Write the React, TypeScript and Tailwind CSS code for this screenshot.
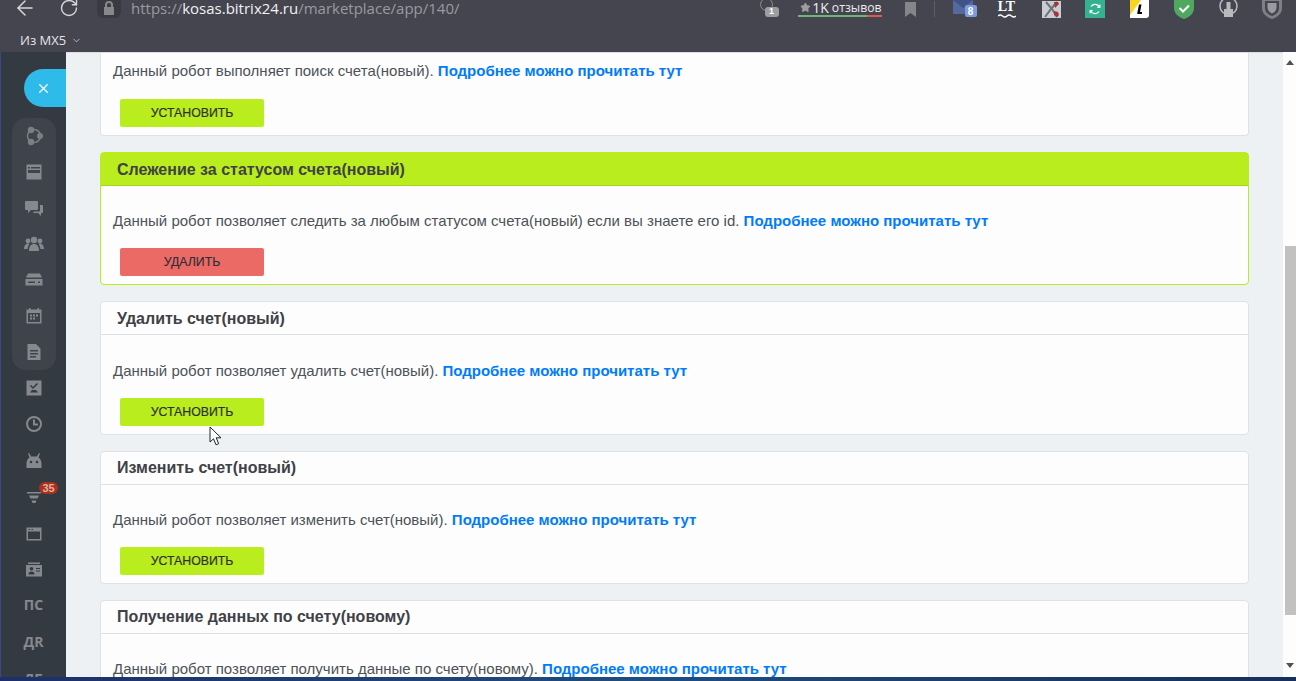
import { ArrowLeft, ChevronDown, RotateCw, Star, X } from "lucide-react";
import type { ReactNode } from "react";

type Robot = {
  title?: string;
  text: string;
  active?: boolean;
};

const robots: Robot[] = [
  { text: "Данный робот выполняет поиск счета(новый)." },
  {
    title: "Слежение за статусом счета(новый)",
    text: "Данный робот позволяет следить за любым статусом счета(новый) если вы знаете его id.",
    active: true,
  },
  { title: "Удалить счет(новый)", text: "Данный робот позволяет удалить счет(новый)." },
  { title: "Изменить счет(новый)", text: "Данный робот позволяет изменить счет(новый)." },
  {
    title: "Получение данных по счету(новому)",
    text: "Данный робот позволяет получить данные по счету(новому).",
  },
];

function Icon({ children }: { children: ReactNode }) {
  return (
    <svg viewBox="0 0 20 20" className="h-5 w-5 fill-[#85888d]">
      {children}
    </svg>
  );
}

const topIcons: ReactNode[] = [
  <Icon key="a">
    <circle cx="10" cy="10" r="6.500" className="fill-none stroke-[#7b7e83] stroke-[1.500]" />
    <circle cx="7" cy="4" r="3.200" className="fill-[#7b7e83]" />
    <circle cx="16" cy="10" r="3" className="fill-[#7b7e83]" />
    <circle cx="7" cy="16" r="3.200" className="fill-[#7b7e83]" />
  </Icon>,
  <Icon key="b">
    <path d="M2.500 2.500h15v15h-15zM4 5v1.500h2V5zm3 0v1.500h9V5zM4 8v3h12V8z" fillRule="evenodd" />
  </Icon>,
  <Icon key="c">
    <path d="M2 3h11a1 1 0 011 1v7a1 1 0 01-1 1H7l-3 3v-3H2a1 1 0 01-1-1V4a1 1 0 011-1z" />
    <path d="M16 7h2a1 1 0 011 1v6a1 1 0 01-1 1h-1v3l-3-3H9l1-1.500h5a1 1 0 001-1z" />
  </Icon>,
  <Icon key="d">
    <circle cx="10" cy="6" r="3.200" />
    <circle cx="4" cy="7" r="2.400" />
    <circle cx="16" cy="7" r="2.400" />
    <path d="M5 17c0-5 2-7 5-7s5 2 5 7zM0 15c0-3 1.500-5.500 4-5.500.6 0 1 .1 1.400.4C4.200 11.500 3.700 13 3.600 15zM20 15c0-3-1.500-5.500-4-5.500-.6 0-1 .1-1.400.4 1.200 1.600 1.700 3.100 1.800 5.100z" />
  </Icon>,
  <Icon key="e">
    <path d="M4 3.500h12l2 4H2zM1.500 9h17v6.500h-17zM4 11.500V13h7v-1.500zM14 11.500V13h2v-1.500z" fillRule="evenodd" />
  </Icon>,
  <Icon key="f">
    <path
      d="M2.500 3.500H5V2h1.500v1.500h7V2H15v1.500h2.500v14h-15zM4 7v9h12V7zM6 8.500h2v2H6zm3 0h2v2H9zm3 0h2v2h-2zm-6 3h2v2H6zm3 0h2v2H9z"
      fillRule="evenodd"
    />
  </Icon>,
  <Icon key="g">
    <path
      d="M3.500 2H12l4.500 4.500V18h-13zM6 8v1.500h8V8zm0 3v1.500h8V11zm0 3v1.500h6V14z"
      fillRule="evenodd"
    />
  </Icon>,
];

const bottomIcons: ReactNode[] = [
  <Icon key="h">
    <path d="M2.500 2.500h15v15h-15z" />
    <path d="M6.500 7.500l2.500 2.500 4.500-4.500" className="fill-none stroke-[#343a42] stroke-[1.500]" />
    <path d="M6 14.500l2-2.500h4l2 2.500z" className="fill-[#343a42]" />
  </Icon>,
  <Icon key="i">
    <circle cx="10" cy="10" r="7" className="fill-none stroke-[#85888d] stroke-2" />
    <path d="M10 5.500v5h4" className="fill-none stroke-[#85888d] stroke-2" />
  </Icon>,
  <Icon key="j">
    <path d="M5 2l2.200 3.500h5.600L15 2l1 .5-1.500 4C16.700 8 17.500 10 17.500 13v4h-15v-4c0-3 .8-5 3-6.500L4 2.500z" />
    <circle cx="7" cy="11" r="1.300" className="fill-[#343a42]" />
    <circle cx="13" cy="11" r="1.300" className="fill-[#343a42]" />
  </Icon>,
  <Icon key="k">
    <path d="M3 5h14v1.500H3zM5 8.500h10l-1.500 3h-7zM7.500 13.500h5l-1 2.500h-3z" />
  </Icon>,
  <Icon key="l">
    <path d="M2.500 3.500h15v13h-15zM4 7.500v7.500h12V7.500zM4.500 5v1H6V5zm3 0v1H9V5z" fillRule="evenodd" />
  </Icon>,
  <Icon key="m">
    <path
      d="M4 2.500h12V4H4zM2 5h16v11.500H2zM7.500 7a1.800 1.800 0 100 3.600 1.800 1.800 0 000-3.600zM4.500 14.500h6c0-2-1-3-3-3s-3 1-3 3zM12 8v1h4V8zm0 2.500v1h4v-1z"
      fillRule="evenodd"
    />
  </Icon>,
];

function RobotCard({ robot }: { robot: Robot }) {
  const edge = robot.active ? "border-[#b9ed1d]" : "border-[#dfe2e5]";
  return (
    <section
      className={`shrink-0 rounded-[4px] bg-[#fdfdfd] ${edge} ${
        robot.title ? "border" : "rounded-t-none border border-t-0"
      }`}
    >
      {robot.title ? (
        <h2
          className={`flex h-[33px] items-center border-b pt-px pl-4 text-base font-bold text-[#3f4147] ${
            robot.active ? "border-[#a5d61b] bg-[#b9ed1d]" : "border-[#dfe2e5]"
          }`}
        >
          {robot.title}
        </h2>
      ) : null}
      <div className={robot.title ? "pt-[24.200px] pb-[8.130px]" : "pt-[7px] pb-[8px]"}>
        <p className="pl-3 text-[15px] leading-[21px] text-[#4d5258]">
          {robot.text}{" "}
          <a className="font-bold text-[#007bff]" href="#tut">
            Подробнее можно прочитать тут
          </a>
        </p>
        <button
          className={`ml-[19px] block h-7 w-36 rounded-[2px] pt-px text-[12.300px] text-[#2f3036] [-webkit-text-stroke:0.2px] ${
            robot.title ? "mt-[17px]" : "mt-[18px]"
          } ${robot.active ? "bg-[#ec6a66]" : "bg-[#b9ed1d]"}`}
        >
          {robot.active ? "УДАЛИТЬ" : "УСТАНОВИТЬ"}
        </button>
      </div>
    </section>
  );
}

function Toolbar() {
  return (
    <div className="flex h-[18px] items-center text-[#d6d6da]">
      <ArrowLeft className="ml-[13px] h-[24px] w-[24px] -translate-y-px" strokeWidth={1.5} />
      <RotateCw className="ml-[22px] h-[20px] w-[20px] -translate-y-px" strokeWidth={1.7} />
      <div className="ml-[18px] flex h-[20px] w-[24px] -translate-y-px items-center justify-center rounded-b-md bg-[#3a3a43]">
        <svg viewBox="0 0 12 14" className="h-[14px] w-[12px] fill-[#87878c]">
          <path d="M2 6V4a4 4 0 018 0v2h1v8H1V6zm2 0h4V4a2 2 0 00-4 0z" />
        </svg>
      </div>
      <div className="ml-[10px] -translate-y-px font-['Open_Sans',sans-serif] text-[15px] leading-[18px] text-[#9a9a9f]">
        https://<span className="text-[#f1f1f3]">kosas.bitrix24.ru</span>/marketplace/app/140/
      </div>

      <div className="relative ml-[300px] h-[18px] w-[19px] shrink-0">
        <div className="absolute top-[-2px] left-0 h-[13px] w-[13px] rounded-full border border-[#8e8e94]" />
        <div className="absolute top-[7px] left-[5px] flex h-[10px] w-[14px] items-center justify-center rounded-[3px] bg-[#9e9ea2] font-['Liberation_Sans',sans-serif] text-[9px] font-bold text-white">
          1
        </div>
      </div>
      <div className="ml-[19px] flex h-[18px] w-[84px] shrink-0 flex-col justify-between">
        <div className="flex items-center whitespace-nowrap pl-[2px] font-['Open_Sans',sans-serif] text-[12.200px] leading-[15px] text-[#ececee]">
          <Star className="mr-[2px] h-[13px] w-[13px] fill-[#9e9ea2] text-[#9e9ea2]" />
          <span className="mr-[3px] text-[14px]">1K</span>
          отзывов
        </div>
        <div className="mb-[1px] flex h-[2px]">
          <div className="w-[69px] bg-[#6fb57a]" />
          <div className="flex-1 bg-[#e0594f]" />
        </div>
      </div>
      <svg viewBox="0 0 11 15" className="ml-[23px] h-[15px] w-[11px] fill-[#85858a]">
        <path d="M0 0h11v15l-5.500-4L0 15z" />
      </svg>
      <div className="ml-[18px] h-[16px] w-px bg-[#5d5d65]" />

      <div className="relative ml-[18px] h-[18px] w-[24px] shrink-0">
        <svg viewBox="0 0 20 14" className="absolute top-0 left-0 h-[14px] w-[20px]">
          <path d="M0 0h20v14H0z" className="fill-[#54699f]" />
          <path d="M0 0l10 8 10-8z" className="fill-[#3f5386]" />
        </svg>
        <div className="absolute top-[5px] right-0 flex h-[12px] w-[12px] items-center justify-center rounded-[2px] bg-[#7d9cdc] font-['Liberation_Sans',sans-serif] text-[10px] font-bold text-white">
          8
        </div>
      </div>
      <div className="relative ml-[21px] h-[18px] w-[18px] shrink-0 text-center font-['Liberation_Serif',serif] text-[14px] leading-[13px] font-bold text-white">
        LT
        <svg viewBox="0 0 18 4" className="absolute bottom-0 left-0 h-[4px] w-[18px] fill-none stroke-white stroke-[1.500]">
          <path d="M0 2q2-2 4.500 0t4.500 0 4.500 0 4.500 0" />
        </svg>
      </div>
      <svg viewBox="0 0 19 17" className="ml-[26px] h-[17px] w-[19px] shrink-0">
        <path d="M0 0h19v17H0z" className="fill-[#c9ccd1]" />
        <path d="M4 1l6 7 5 8M15 1L9 8l-6 8" className="fill-none stroke-[#6f7176] stroke-2" />
        <path d="M12 1h4l1 2-4 4zM12 10l4 1 1 3-2 2-3-2z" className="fill-[#a8323a]" />
      </svg>
      <div className="ml-[24px] flex h-[18px] w-[20px] shrink-0 items-center justify-center bg-[#35b192]">
        <svg viewBox="0 0 12 12" className="h-[12px] w-[12px] fill-none stroke-white stroke-[1.300]">
          <path d="M2 3.500A5 5 0 0110.500 4M10 8.500A5 5 0 011.500 8" />
          <path d="M10.800 1.800v2.500H8.300M1.200 10.200V7.700h2.500" />
        </svg>
      </div>
      <svg viewBox="0 0 19 18" className="ml-[25px] h-[18px] w-[19px] shrink-0">
        <path d="M0 0h19v15a3 3 0 01-3 3H0z" className="fill-white" />
        <path d="M0 0h11L0 15z" className="fill-[#f9d423]" />
        <path d="M9 4.500h2.500L10 12h2v2H8a.7.7 0 01-.7-1z" className="fill-black" />
      </svg>
      <svg viewBox="0 0 20 19" className="ml-[25px] h-[19px] w-[20px] shrink-0">
        <path d="M0 0h20v8c0 5-4 9-10 11C4 17 0 13 0 8z" className="fill-[#4fa85f]" />
        <path d="M5.500 8l3.500 3.500L15 5.500" className="fill-none stroke-white stroke-2" />
      </svg>
      <svg viewBox="0 0 19 19" className="ml-[25px] h-[19px] w-[19px] shrink-0">
        <circle cx="9.500" cy="6" r="8.500" className="fill-none stroke-[#b9b9bd] stroke-[1.500]" />
        <path d="M7.500 2h4v7h2.500v8H5V9h2.500z" className="fill-[#b9b9bd]" />
      </svg>
      <svg viewBox="0 0 20 19" className="ml-[24px] h-[19px] w-[20px] shrink-0">
        <path d="M0 0h20v8c0 5-4 9-10 11C4 17 0 13 0 8z" className="fill-[#7f7f85]" />
        <path d="M3 1h14v7c0 4-3 6.500-7 8-4-1.500-7-4-7-8z" className="fill-[#45454f]" />
        <path d="M5.500 3h9v4.500c0 3-2 5-4.500 6-2.500-1-4.500-3-4.500-6z" className="fill-[#9a9a9f]" />
      </svg>
    </div>
  );
}

function ScrollArrow({ down }: { down?: boolean }) {
  return (
    <svg viewBox="0 0 8 5" className="mx-auto h-[5px] w-[8px] fill-[#505050]">
      <path d={down ? "M0 0h8L4 5z" : "M0 5h8L4 0z"} />
    </svg>
  );
}

export default function App() {
  return (
    <div className="relative flex h-[681px] w-[1296px] flex-col overflow-hidden bg-[#45454f] font-['Liberation_Sans',Arial,sans-serif]">
      <header className="h-[52px] shrink-0 bg-[#45454f]">
        <Toolbar />
        <div className="mt-[13px] flex items-center pl-[20px] font-['Open_Sans',sans-serif] text-[13px] leading-[18px] text-[#e4e4e7]">
          Из MX5
          <ChevronDown className="ml-[5px] h-[11px] w-[11px] text-[#bdbdc2]" strokeWidth={2} />
        </div>
      </header>

      <div className="flex min-h-0 flex-1">
        <aside className="relative w-[66px] shrink-0 overflow-hidden border-l border-[#3b4687] bg-[#343a42]">
          <div className="mt-[17px] ml-[23px] flex h-[38px] w-[42px] items-center rounded-l-full bg-[#2fbbe9] pl-[12px]">
            <X className="h-[15px] w-[15px] text-white" strokeWidth={2} />
          </div>
          <div className="mt-[11px] ml-[11px] flex h-[252px] w-[44px] flex-col items-center justify-between rounded-[14px] bg-[#3f444c] py-[8px]">
            {topIcons}
          </div>
          <div className="mt-[8px] flex flex-col items-center gap-[16.400px]">
            {bottomIcons}
          </div>
          <div className="absolute top-[430px] left-[38px] rounded-full bg-[#a9331a] px-[3.500px] text-[11px] leading-[12px] font-bold text-[#e3b0a2]">
            35
          </div>
          <div className="mt-[15px] flex flex-col items-center gap-[17px] font-['Open_Sans',sans-serif] text-[14px] leading-[20px] font-bold text-[#85888d]">
            <span>ПС</span>
            <span>ДR</span>
            <span>ДБ</span>
          </div>
        </aside>

        <main className="flex min-w-0 flex-1 flex-col gap-4 overflow-hidden border-t border-[#dcdde0] bg-[#edf1f4] px-[34px]">
          {robots.map((robot) => (
            <RobotCard key={robot.text} robot={robot} />
          ))}
        </main>

        <div className="flex w-[13px] shrink-0 flex-col bg-[#fdfdfd] pt-[8px] pb-[9px]">
          <ScrollArrow />
          <div className="mt-[181px] ml-[2px] h-[369px] bg-[#c1c1c1]" />
          <div className="mt-auto">
            <ScrollArrow down />
          </div>
        </div>
      </div>

      <div className="h-[4px] shrink-0 bg-gradient-to-r from-[#1c2f6b] via-[#1f4d80] to-[#16305c]" />

      <svg viewBox="0 0 14 20" className="absolute top-[426px] left-[209px] h-[20px] w-[14px]">
        <path
          d="M1 1v15l3.500-3.200 2.500 6 2.700-1.100-2.500-5.900H12z"
          className="fill-white stroke-[#1c2430] stroke-1"
        />
      </svg>
    </div>
  );
}
